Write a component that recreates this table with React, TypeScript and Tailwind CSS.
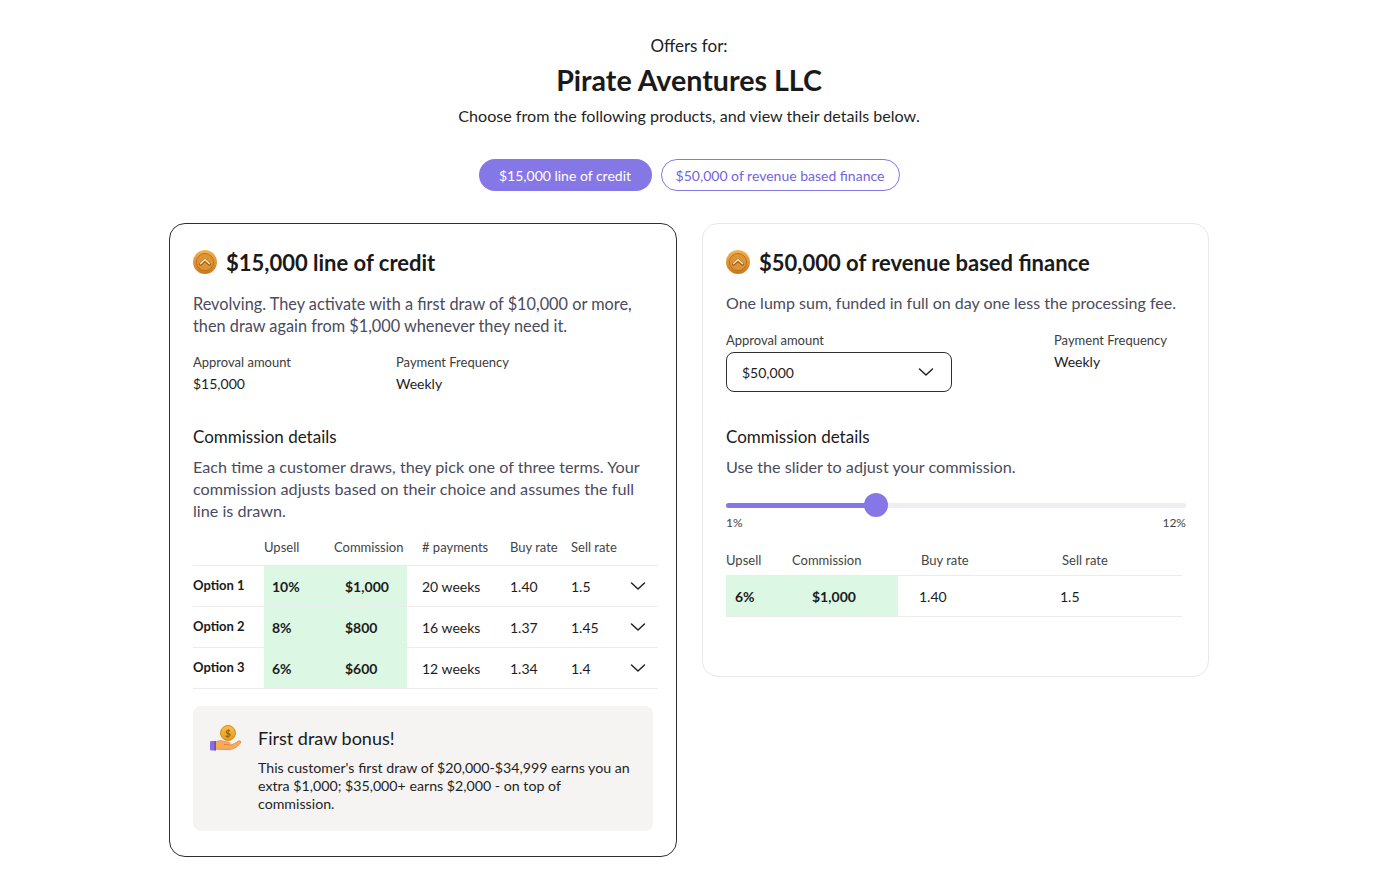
import React from "react";

function Coin() {
  return (
    <svg width="24" height="24" viewBox="0 0 24 24" className="shrink-0">
      <defs>
        <linearGradient id="cg" x1="0" y1="0" x2="0" y2="1">
          <stop offset="0" stopColor="#f2b552" />
          <stop offset="1" stopColor="#c8781f" />
        </linearGradient>
      </defs>
      <circle cx="12" cy="12" r="12" fill="url(#cg)" />
      <circle cx="12" cy="12" r="8.6" fill="#dc9435" stroke="#b8691a" strokeWidth="0.8" />
      <path d="M7.6 14.2 L12 10.2 L16.4 14.2" fill="none" stroke="#9a5512" strokeWidth="3" strokeLinecap="round" strokeLinejoin="round" />
      <path d="M7.6 13.6 L12 9.6 L16.4 13.6" fill="none" stroke="#fbe0a8" strokeWidth="1.6" strokeLinecap="round" strokeLinejoin="round" />
    </svg>
  );
}

function HandCoin() {
  return (
    <svg width="33" height="27" viewBox="0 0 33 27" className="shrink-0">
      <defs>
        <linearGradient id="hc" x1="0" y1="0" x2="0" y2="1">
          <stop offset="0" stopColor="#f9c04a" />
          <stop offset="1" stopColor="#e19a1c" />
        </linearGradient>
      </defs>
      <circle cx="19" cy="8" r="7.5" fill="url(#hc)" stroke="#d88a14" strokeWidth="1" />
      <text x="19" y="11.6" textAnchor="middle" fontSize="10" fontWeight="700" fill="#9b5a0c" fontFamily="Lato, sans-serif">$</text>
      <path d="M6 17.5 C9 15.5 12 15.2 15 16.3 L20 17.4 C21.5 17.8 21.4 19.6 19.8 19.6 L15 19.4 L21 19.9 C24 19.8 27 17.5 29.5 16 C31 15.2 32.6 16.6 31.5 18 C28.5 21.8 24.5 24.6 19 24.6 L9 24.2 L6 24.2 Z" fill="#f7a95c" stroke="#e0853a" strokeWidth="0.8" strokeLinejoin="round" />
      <rect x="1" y="16" width="6" height="9.5" rx="1.2" fill="#8a6ee0" />
      <rect x="5.2" y="16" width="1.8" height="9.5" fill="#6d52c9" />
    </svg>
  );
}

function Chevron({ className = "" }: { className?: string }) {
  return (
    <svg width="16" height="10" viewBox="0 0 16 10" className={className}>
      <path d="M1.5 2 L8 8 L14.5 2" fill="none" stroke="#222" strokeWidth="1.5" strokeLinecap="round" strokeLinejoin="round" />
    </svg>
  );
}

const rows = [
  { label: "Option 1", upsell: "10%", comm: "$1,000", pay: "20 weeks", buy: "1.40", sell: "1.5" },
  { label: "Option 2", upsell: "8%", comm: "$800", pay: "16 weeks", buy: "1.37", sell: "1.45" },
  { label: "Option 3", upsell: "6%", comm: "$600", pay: "12 weeks", buy: "1.34", sell: "1.4" },
];

export default function App() {
  return (
    <div className="min-h-screen bg-white text-[#1c1c1c] font-['Lato',sans-serif]">
      <div className="flex flex-col items-center pr-4 pt-[34px] pb-10">
        <div className="text-[17px] leading-6 text-[#222]">Offers for:</div>
        <h1 className="mt-1 text-[28.6px] leading-9 font-bold text-[#1a1a1a]">Pirate Aventures LLC</h1>
        <p className="mt-1.5 text-[16.1px] leading-6 text-[#1f1f1f]">
          Choose from the following products, and view their details below.
        </p>

        <div className="mt-[31px] flex gap-[9px]">
          <button className="h-8 w-[173px] rounded-full bg-[#8677e6] text-[14px] text-white">
            $15,000 line of credit
          </button>
          <button className="h-8 w-[239px] rounded-full border border-[#8677e6] bg-white text-[14px] text-[#7463e0]">
            $50,000 of revenue based finance
          </button>
        </div>

        <div className="mt-8 flex items-start gap-[25px]">
          {/* Left card */}
          <div className="w-[508px] rounded-[16px] border border-[#2e2e2e] px-[23px] pt-[23px] pb-[25px]">
            <div className="flex h-[30px] items-center gap-[9px]">
              <Coin />
              <h2 className="text-[22px] font-bold text-[#1a1a1a]">$15,000 line of credit</h2>
            </div>
            <p className="mt-[16px] text-[16.3px] leading-[22px] text-[#4b4b5c]">
              Revolving. They activate with a first draw of $10,000 or more, then draw again from $1,000 whenever they need it.
            </p>
            <div className="mt-[16px] grid grid-cols-[203px_1fr]">
              <div>
                <div className="text-[13px] leading-[18px] text-[#3c3c3c]">Approval amount</div>
                <div className="mt-[3px] text-[14px] leading-5 text-[#1c1c1c]">$15,000</div>
              </div>
              <div>
                <div className="text-[13px] leading-[18px] text-[#3c3c3c]">Payment Frequency</div>
                <div className="mt-[3px] text-[14px] leading-5 text-[#1c1c1c]">Weekly</div>
              </div>
            </div>

            <h3 className="mt-[31px] text-[17px] leading-6 text-[#1a1a1a]">Commission details</h3>
            <p className="mt-[7px] text-[16.2px] leading-[22px] text-[#4b4b5c]">
              Each time a customer draws, they pick one of three terms. Your commission adjusts based on their choice and assumes the full line is drawn.
            </p>

            <div className="mt-2 w-[465px] text-[14px]">
              <div className="grid h-[36px] grid-cols-[71px_66px_77px_95px_61px_60px_1fr] items-center border-b border-[#ececec] text-[13px] text-[#444]">
                <div />
                <div>Upsell</div>
                <div className="pl-1">Commission</div>
                <div className="pl-[15px]">#&nbsp;payments</div>
                <div className="pl-[8px]">Buy rate</div>
                <div className="pl-[8px]">Sell rate</div>
                <div />
              </div>
              {rows.map((r) => (
                <div
                  key={r.label}
                  className="grid h-[41px] grid-cols-[71px_66px_77px_95px_61px_60px_1fr] items-stretch border-b border-[#ececec]"
                >
                  <div className="flex items-center text-[13px] font-bold text-[#1a1a1a]">{r.label}</div>
                  <div className="flex items-center bg-[#dcf7e4] pl-2 font-bold">{r.upsell}</div>
                  <div className="flex items-center bg-[#dcf7e4] pl-[15px] font-bold">{r.comm}</div>
                  <div className="flex items-center pl-[15px]">{r.pay}</div>
                  <div className="flex items-center pl-[8px]">{r.buy}</div>
                  <div className="flex items-center pl-[8px]">{r.sell}</div>
                  <div className="flex items-center justify-end pr-[12px]">
                    <Chevron />
                  </div>
                </div>
              ))}
            </div>

            <div className="mt-[17px] flex gap-[16px] rounded-[8px] bg-[#f5f4f2] pl-4 pr-4 pt-[19px] pb-[18px]">
              <div>
                <HandCoin />
              </div>
              <div>
                <div className="text-[18px] leading-[26px] text-[#1a1a1a]">First draw bonus!</div>
                <p className="mt-2 text-[14.2px] leading-[18px] text-[#1f1f1f]">
                  This customer's first draw of $20,000-$34,999 earns you an extra $1,000; $35,000+ earns $2,000 - on top of commission.
                </p>
              </div>
            </div>
          </div>

          {/* Right card */}
          <div className="w-[507px] rounded-[16px] border border-[#e8e8ea] px-[23px] pt-[23px] pb-[59px]">
            <div className="flex h-[30px] items-center gap-[9px]">
              <Coin />
              <h2 className="text-[22px] font-bold text-[#1a1a1a]">$50,000 of revenue based finance</h2>
            </div>
            <p className="mt-[15px] text-[16px] leading-[22px] text-[#4b4b5c]">
              One lump sum, funded in full on day one less the processing fee.
            </p>
            <div className="mt-[17px] grid grid-cols-[328px_1fr]">
              <div>
                <div className="text-[13px] leading-[18px] text-[#3c3c3c]">Approval amount</div>
                <div className="mt-[3px] flex h-10 w-[226px] items-center justify-between rounded-[8px] border border-[#2e2e2e] pl-[15px] pr-[17px] text-[14px]">
                  <span>$50,000</span>
                  <Chevron />
                </div>
              </div>
              <div>
                <div className="text-[13px] leading-[18px] text-[#3c3c3c]">Payment Frequency</div>
                <div className="mt-[3px] text-[14px] leading-5 text-[#1c1c1c]">Weekly</div>
              </div>
            </div>

            <h3 className="mt-[33px] text-[17px] leading-6 text-[#1a1a1a]">Commission details</h3>
            <p className="mt-[7px] text-[16.2px] leading-[22px] text-[#4b4b5c]">
              Use the slider to adjust your commission.
            </p>

            <div className="relative mt-[15px] h-6 w-[460px]">
              <div className="absolute left-0 right-0 top-[9.5px] h-[5px] rounded-full bg-[#ededf3]" />
              <div className="absolute left-0 top-[9.5px] h-[5px] w-[150px] rounded-full bg-[#8677e6]" />
              <div className="absolute left-[138px] top-0 h-6 w-6 rounded-full bg-[#8677e6]" />
            </div>
            <div className="-mt-0.5 flex w-[460px] justify-between text-[12px] leading-4 text-[#444]">
              <span>1%</span>
              <span>12%</span>
            </div>

            <div className="mt-[15px] w-[456px] text-[14px]">
              <div className="grid h-[30px] grid-cols-[66px_106px_141px_1fr] items-center border-b border-[#ececec] text-[13px] text-[#444]">
                <div>Upsell</div>
                <div>Commission</div>
                <div className="pl-[23px]">Buy rate</div>
                <div className="pl-[23px]">Sell rate</div>
              </div>
              <div className="grid h-[41px] grid-cols-[66px_106px_141px_1fr] items-stretch border-b border-[#ececec]">
                <div className="flex items-center bg-[#dcf7e4] pl-[9px] font-bold">6%</div>
                <div className="flex items-center bg-[#dcf7e4] pl-[20px] font-bold">$1,000</div>
                <div className="flex items-center pl-[21px]">1.40</div>
                <div className="flex items-center pl-[21px]">1.5</div>
              </div>
            </div>
          </div>
        </div>
      </div>
    </div>
  );
}
